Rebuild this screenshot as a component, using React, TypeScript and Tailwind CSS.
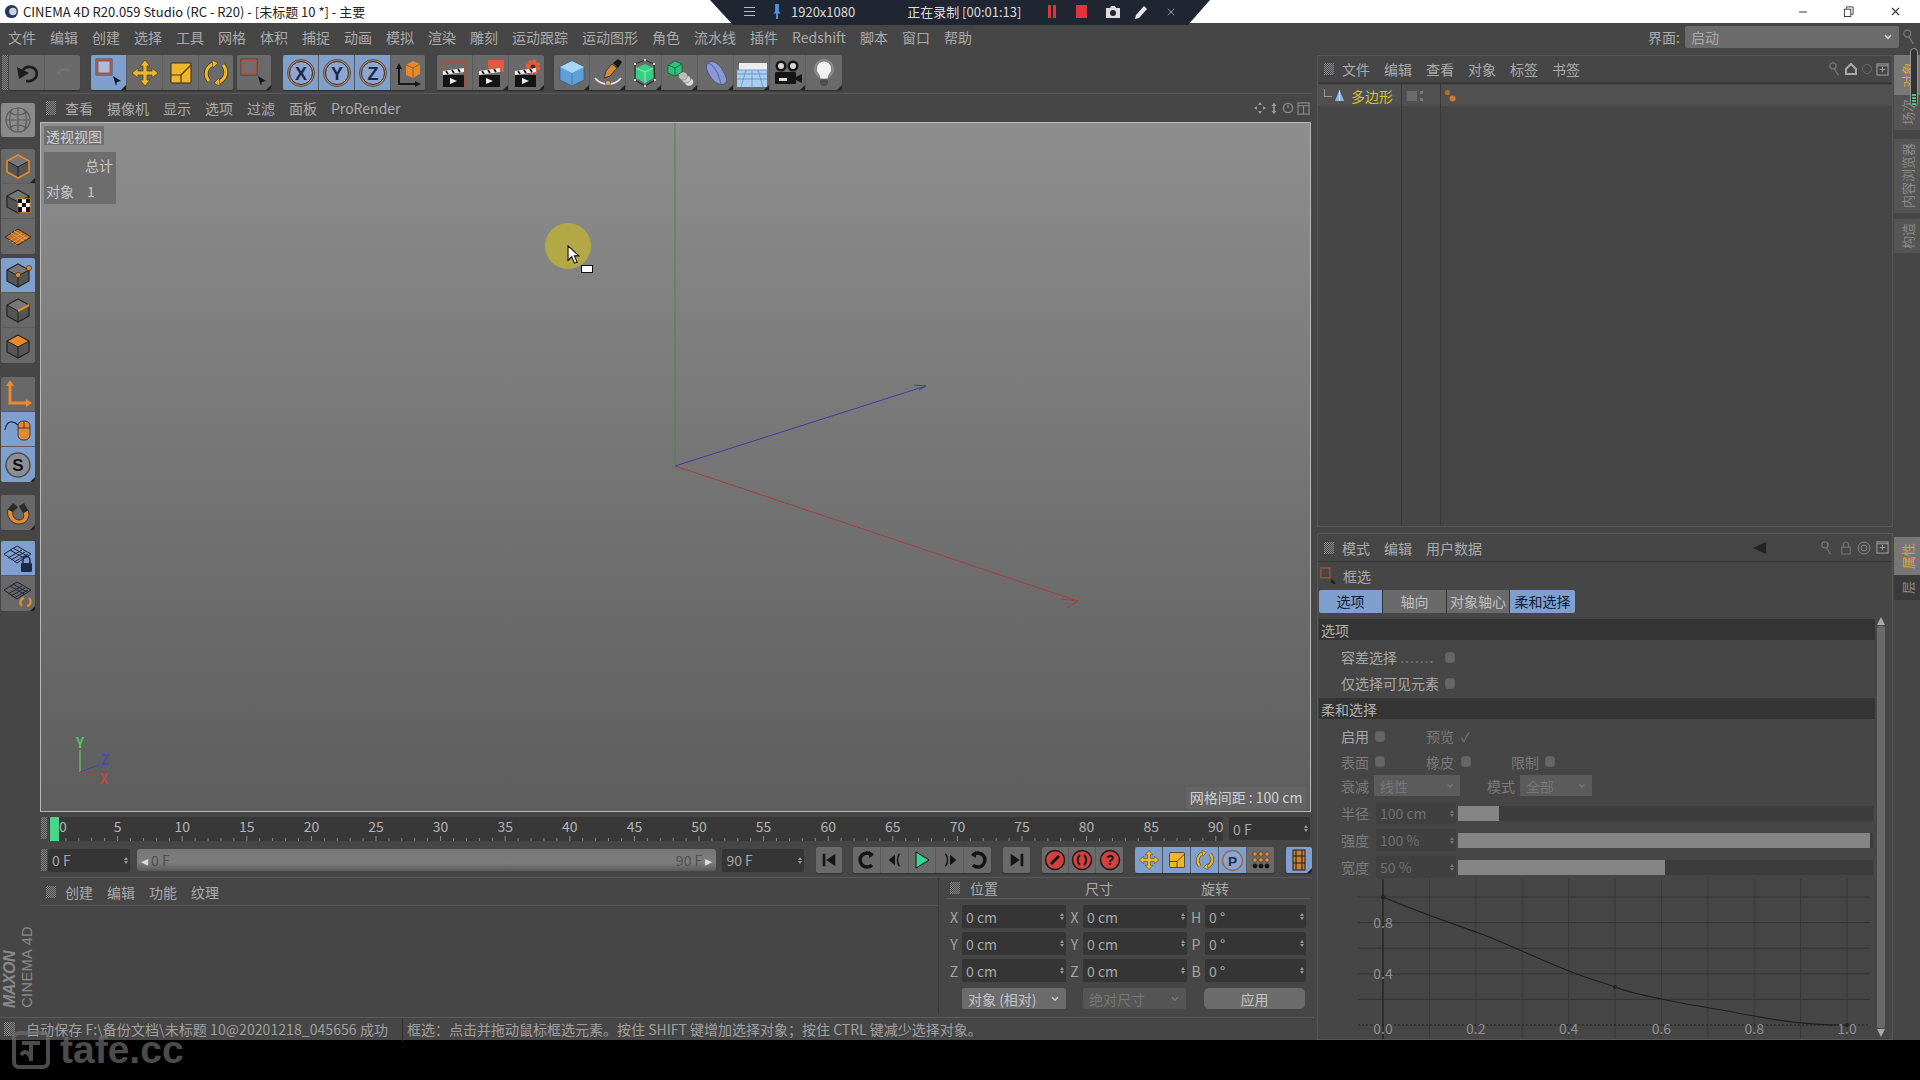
import React from 'react';
import { ChevronDown, Minus, X } from 'lucide-react';

const OR = '#e58a2e';
const YE = '#eab72f';
const NAVY = '#1b2a4a';

const menus = ['文件', '编辑', '创建', '选择', '工具', '网格', '体积', '捕捉', '动画', '模拟', '渲染', '雕刻', '运动跟踪', '运动图形', '角色', '流水线', '插件', 'Redshift', '脚本', '窗口', '帮助'];

function Grip({ className = '' }: { className?: string }) {
  return <div className={`bg-[conic-gradient(#8c8c8c_25%,#424242_0_50%,#8c8c8c_0_75%,#424242_0)] bg-[length:2px_2px] ${className}`} />;
}

function Svg({ children }: { children: React.ReactNode }) {
  return (
    <svg viewBox="0 0 30 30" className="w-[30px] h-[30px]">
      {children}
    </svg>
  );
}

const Corner = () => <span className="absolute right-0 bottom-0 w-0 h-0 border-l-[5px] border-l-transparent border-b-[5px] border-b-[#222]" />;

function Tool({ active, children, w = 'w-[36px]', short, corner }: { active?: boolean; children: React.ReactNode; w?: string; short?: boolean; corner?: boolean }) {
  return (
    <div className={`relative ${w} ${short ? 'h-[26px]' : 'h-[35px]'} flex items-center justify-center border-r border-[#5a5a5a] last:border-r-0 ${active ? 'bg-[#7f9fcf]' : 'bg-[#6a6a6a]'}`}>
      {children}
      {corner && <Corner />}
    </div>
  );
}

function ToolGroup({ children, className = '' }: { children: React.ReactNode; className?: string }) {
  return <div className={`flex rounded-[2px] overflow-hidden shadow-[0_1px_1px_#2f2f2f] ${className}`}>{children}</div>;
}

function LeftTool({ active, children, corner }: { active?: boolean; children: React.ReactNode; corner?: boolean }) {
  return (
    <div className={`relative w-[34px] h-[35px] flex items-center justify-center border-b border-[#5c5c5c] last:border-b-0 ${active ? 'bg-[#7f9fcf]' : 'bg-[#686868]'}`}>
      {children}
      {corner && <Corner />}
    </div>
  );
}

const Select = ({ active }: { active?: boolean }) => (
  <Svg>
    <rect x="2" y="1" width="16" height="16" fill="none" stroke="#3a3a3a" strokeWidth="0.8" />
    <rect x="3.5" y="2.5" width="13" height="13" fill={active ? '#a9bedd' : '#6f6f6f'} stroke="#b5523f" strokeWidth="2" />
    <path d="M19 18l8 5-4 1-1 4z" fill="#10172a" />
  </Svg>
);
const MoveIcon = () => (
  <Svg>
    <path d="M15 2l5 6h-3v5h5v-3l6 5-6 5v-3h-5v5h3l-5 6-5-6h3v-5H8v3l-6-5 6-5v3h5V8h-3z" fill={YE} stroke="#5a4414" strokeWidth="0.8" />
  </Svg>
);
const ScaleIcon = () => (
  <Svg>
    <rect x="5" y="5" width="20" height="20" rx="1" fill="#f0b52f" stroke="#3c2e10" strokeWidth="1" />
    <path d="M5 17h10v8M15 17l10-10" fill="none" stroke="#4a3a14" strokeWidth="1.2" />
  </Svg>
);
const RotateIcon = () => (
  <Svg>
    <path d="M8 23C3 17 5 9 12 6M22 7c5 6 3 14-4 17" fill="none" stroke="#4a3a14" strokeWidth="4.6" />
    <path d="M8 23C3 17 5 9 12 6M22 7c5 6 3 14-4 17" fill="none" stroke={YE} strokeWidth="3" />
    <path d="M11 2l6 3-5 5zM19 28l-6-3 5-5z" fill={YE} stroke="#4a3a14" strokeWidth="0.6" />
  </Svg>
);
const AxisCircle = ({ l }: { l: string }) => (
  <Svg>
    <circle cx="15" cy="15" r="13.5" fill="#a98a74" stroke="#6a4a30" strokeWidth="1" />
    <circle cx="15" cy="15" r="11.5" fill="#8ea6cf" stroke="#2b2b2b" strokeWidth="1" />
    <text x="15" y="21.5" textAnchor="middle" fontSize="18" fontWeight="700" fill={NAVY} fontFamily="Liberation Sans">{l}</text>
  </Svg>
);
const CoordIcon = () => (
  <Svg>
    <path d="M6 10v16h18" fill="none" stroke="#181818" strokeWidth="2" />
    <path d="M6 5l3 6H3zM28 26l-6 3v-6z" fill="#181818" />
    <path d="M13 7l7-4 7 3v10l-7 4-7-3z" fill={OR} />
    <path d="M13 7l7 3 7-4M20 10v10" fill="none" stroke="#9a5a18" strokeWidth="1" />
  </Svg>
);
const Clapper = ({ kind }: { kind: 0 | 1 | 2 }) => (
  <Svg>
    {kind === 0 && <path d="M3 13V2h24v26h-3M5 13V4h20v24" fill="none" stroke="#a8503a" strokeWidth="1" />}
    {kind === 1 && <rect x="12" y="2" width="16" height="12" rx="1" fill="#de5d3c" />}
    {kind === 2 && <circle cx="21" cy="9" r="6" fill="#de5d3c" stroke="#de5d3c" strokeWidth="3" strokeDasharray="3 1.6" />}
    {kind === 2 && <circle cx="21" cy="9" r="2.4" fill="#333" />}
    <rect x="3" y="17" width="21" height="12" fill="#141414" />
    <path d="M3 13l21-3v4L3 17z" fill="#eee" />
    <path d="M6 13l2 3M12 12l2 3M18 11l2 3" stroke="#111" strokeWidth="1.8" />
    <path d="M10 20l7 3-7 3z" fill="#eee" />
  </Svg>
);
const BlueCube = () => (
  <Svg>
    <path d="M15 3l12 6v13l-12 6-12-6V9z" fill="#5f9fd8" stroke="#2f4d70" strokeWidth="0.6" />
    <path d="M15 3l12 6-12 6L3 9z" fill="#a6d6f2" />
    <path d="M15 15v13" stroke="#3f78ac" strokeWidth="0.8" />
  </Svg>
);
const PenIcon = () => (
  <Svg>
    <path d="M19 6l5 4-7 8-6 2 2-7z" fill="#d98a36" stroke="#1c1c1c" strokeWidth="0.7" />
    <path d="M20 5l5-4 4 3-4 6z" fill="#181818" />
    <path d="M2 20c6 8 20 8 26 0" fill="none" stroke="#e6e6e6" strokeWidth="1.8" />
    <circle cx="15" cy="25" r="2.6" fill="#d9a860" stroke="#333" strokeWidth="0.5" />
  </Svg>
);
const GreenBox = () => (
  <Svg>
    <path d="M6 6l10-4 9 4 1 16-10 6-10-6z" fill="none" stroke="#2a2a2a" strokeWidth="1.1" />
    <path d="M7 10l9-4 8 4v10l-8 5-9-5z" fill="#38cf85" />
    <path d="M7 10l9 4 8-4M16 14v11" fill="none" stroke="#8ef0b4" strokeWidth="1" />
    <g fill="#eee">
      <circle cx="6" cy="6" r="1.1" />
      <circle cx="25" cy="6" r="1.1" />
      <circle cx="6" cy="22" r="1.1" />
      <circle cx="26" cy="22" r="1.1" />
      <circle cx="16" cy="2" r="1.1" />
      <circle cx="16" cy="28" r="1.1" />
    </g>
  </Svg>
);
const ArrayIcon = () => (
  <Svg>
    <ellipse cx="24" cy="24" rx="4.5" ry="4" fill="#ddd" stroke="#666" strokeWidth="0.5" />
    <ellipse cx="21" cy="21" rx="4.5" ry="4" fill="#cfcfcf" stroke="#666" strokeWidth="0.5" />
    <ellipse cx="18" cy="18" rx="4.5" ry="4" fill="#bdbdbd" stroke="#666" strokeWidth="0.5" />
    <path d="M3 7l7-4 7 3v8l-7 4-7-3z" fill="#2fc07a" stroke="#14492c" strokeWidth="0.6" />
    <path d="M3 7l7 3 7-4M10 10v8" fill="none" stroke="#0f6d40" strokeWidth="1" />
  </Svg>
);
const Blob = () => (
  <Svg>
    <path d="M7 5c5-4 11 1 15 8s5 11 1 13c-5 2-11-3-14-8S4 8 7 5z" fill="#8a9ad8" stroke="#3a4574" strokeWidth="0.7" />
    <path d="M7 5c5 2 10 8 13 21" fill="none" stroke="#5e6da8" strokeWidth="1.2" />
  </Svg>
);
const FloorIcon = () => (
  <Svg>
    <path d="M2 5h28v7H2z" fill="#ececec" />
    <path d="M0 12h30v17H0z" fill="#a9cdf0" />
    <path d="M0 16h30M0 21h30M9 12L4 29M21 12l5 17M15 12v17M0 12h30" stroke="#6f94c0" strokeWidth="0.9" fill="none" />
  </Svg>
);
const CameraIcon = () => (
  <Svg>
    <circle cx="8" cy="8" r="5.5" fill="#151515" />
    <circle cx="20" cy="8" r="5.5" fill="#151515" />
    <circle cx="8" cy="8" r="3" fill="#d8d8d8" />
    <circle cx="20" cy="8" r="3" fill="#d8d8d8" />
    <rect x="2" y="14" width="21" height="12" rx="1" fill="#151515" />
    <rect x="6" y="20" width="8" height="3" fill="#ddd" />
    <path d="M23 19l6-3v9l-6-3z" fill="#151515" />
  </Svg>
);
const BulbIcon = () => (
  <Svg>
    <circle cx="15" cy="11" r="10" fill="#8e8e8e" />
    <path d="M15 3a8 8 0 0 1 5 14l-1 4h-8l-1-4a8 8 0 0 1 5-14z" fill="#f2f2f2" stroke="#555" strokeWidth="0.7" />
    <path d="M11 22h8v3l-2 3h-4l-2-3z" fill="#4e4e4e" />
  </Svg>
);
const Cube = ({ mode }: { mode: 'model' | 'point' | 'edge' | 'poly' | 'tex' }) => (
  <Svg>
    <path d="M15 4l11 6v11l-11 6-11-6V10z" fill="#555" />
    <path d="M15 4l11 6-11 6-11-6z" fill={mode === 'poly' ? OR : '#777'} />
    <path d="M15 16v11M4 10l11 6 11-6" fill="none" stroke="#222" strokeWidth="1" />
    <path d="M15 4l11 6v11l-11 6-11-6V10z" fill="none" stroke={mode === 'model' ? OR : '#222'} strokeWidth={mode === 'model' ? 1.6 : 1.2} />
    {mode === 'point' && (
      <>
        <circle cx="15" cy="15" r="2.6" fill={OR} stroke="#222" strokeWidth="0.6" />
        <circle cx="26" cy="8" r="2.6" fill={OR} stroke="#222" strokeWidth="0.6" />
      </>
    )}
    {mode === 'edge' && <path d="M15 16l11-6" stroke={OR} strokeWidth="2" />}
    {mode === 'tex' && (
      <>
        <rect x="15" y="13" width="12" height="13" fill="#f3f3f3" stroke={OR} />
        <path d="M15 13h4v4h-4zM23 13h4v4h-4zM19 17h4v4h-4zM15 21h4v5h-4zM23 21h4v5h-4z" fill="#111" />
      </>
    )}
  </Svg>
);
const MeshIcon = ({ children }: { children?: React.ReactNode }) => (
  <Svg>
    <path d="M14 3l14 8-14 9L1 11z" fill="none" stroke="#1c2433" strokeWidth="1" />
    <path d="M7 7l14 8M10 5l14 8M5 15l14-8M8 17l14-8M11 19l14-8" stroke="#1c2433" strokeWidth="1" />
    {children}
  </Svg>
);
const Grid3D = () => (
  <Svg>
    <path d="M15 7l13 8-13 8-13-8z" fill="#b9702a" stroke="#3a2a18" />
    <path d="M8 11l13 8M11 9l13 8M6 19l13-8M9 21l13-8M12 22.5l13-8" stroke="#f0a04a" strokeWidth="0.9" />
  </Svg>
);

function Frame({ v, w = 'w-[104px]', text = 'text-[14px]' }: { v: string; w?: string; text?: string }) {
  return (
    <div className={`${w} h-[23px] bg-[#353535] rounded-[2px] flex items-center justify-between pl-[4px] pr-[2px] text-[#a8a8a8] ${text}`}>
      <span>{v}</span>
      <span className="flex flex-col gap-[1px]">
        <span className="w-0 h-0 border-x-[2.5px] border-x-transparent border-b-[3px] border-b-[#999]" />
        <span className="w-0 h-0 border-x-[2.5px] border-x-transparent border-t-[3px] border-t-[#999]" />
      </span>
    </div>
  );
}

function CoordRow({ a, b, c, av, cv }: { a: string; b: string; c: string; av: string; cv: string }) {
  return (
    <div className="flex items-center h-[23px] text-[14px] text-[#a5a5a5]">
      <span className="w-[16px] text-center">{a}</span>
      <Frame v={av} />
      <span className="w-[17px] text-center">{b}</span>
      <Frame v={av} />
      <span className="w-[18px] text-center">{c}</span>
      <Frame v={cv} w="w-[101px]" />
    </div>
  );
}

function Check() {
  return <span className="inline-block w-[10px] h-[11px] rounded-[2px] bg-[#666] shadow-[inset_0_0_1px_#222]" />;
}

function Slider({ label, value, fill }: { label: string; value: string; fill: string }) {
  return (
    <div className="flex items-center h-[22px] mt-[5px]">
      <span className="w-[57px] pl-[22px] text-[14px] text-[#7c7c7c] whitespace-nowrap">{label}</span>
      <div className="w-[80px] h-[22px] bg-[#404040] flex items-center justify-between pl-[4px] pr-[2px] text-[14px] text-[#707070]">
        <span>{value}</span>
        <span className="flex flex-col gap-[1px]">
          <span className="w-0 h-0 border-x-[2.5px] border-x-transparent border-b-[3px] border-b-[#777]" />
          <span className="w-0 h-0 border-x-[2.5px] border-x-transparent border-t-[3px] border-t-[#777]" />
        </span>
      </div>
      <div className="ml-[2px] w-[415px] h-[15px] bg-[#3c3c3c]">
        <div className={`h-full bg-[#858585] ${fill}`} />
      </div>
    </div>
  );
}

function Dim({ children, className = '' }: { children: React.ReactNode; className?: string }) {
  return <span className={`text-[14px] text-[#7a7a7a] whitespace-nowrap ${className}`}>{children}</span>;
}

function Section({ children, className = '' }: { children: React.ReactNode; className?: string }) {
  return <div className={`h-[21px] bg-[#343434] pl-[2px] flex items-center text-[14px] text-[#b0b0b0] ${className}`}>{children}</div>;
}

function FalloffGraph() {
  const xs = Array.from({ length: 11 }, (_, i) => 25 + i * 46.4);
  const ys = Array.from({ length: 6 }, (_, i) => 18 + i * 25.6);
  const labels = ['0.0', '0.2', '0.4', '0.6', '0.8', '1.0'];
  return (
    <svg width="520" height="160" className="block">
      <path d="M0 14v8l4-4z" fill="#222" transform="translate(-5 0)" />
      {xs.map((x) => (
        <line key={x} x1={x} y1="0" x2={x} y2="160" stroke="#393939" strokeWidth="1" />
      ))}
      {ys.slice(0, 5).map((y) => (
        <line key={y} x1="0" y1={y} x2="512" y2={y} stroke="#343434" strokeWidth="1" />
      ))}
      <line x1="25" y1="0" x2="25" y2="160" stroke="#1c1c1c" strokeWidth="1" />
      <line x1="0" y1="146" x2="512" y2="146" stroke="#1c1c1c" strokeWidth="1" strokeDasharray="2 2" />
      <path d="M25 18C60 33 90 43 118 53S180 80 211 92S245 103 257 108S285 116 303 120S360 130 396 137S460 146 489 146" fill="none" stroke="#1f1f1f" strokeWidth="1.2" />
      <circle cx="25" cy="18" r="2" fill="#222" />
      <circle cx="257" cy="108" r="2" fill="#222" />
      <circle cx="489" cy="146" r="2" fill="#222" />
      <text x="25" y="49" textAnchor="middle" fontSize="14" fill="#909090">0.8</text>
      <text x="25" y="100" textAnchor="middle" fontSize="14" fill="#909090">0.4</text>
      {labels.map((t, i) => (
        <text key={t} x={25 + i * 92.8} y="155" textAnchor="middle" fontSize="14" fill="#909090">{t}</text>
      ))}
    </svg>
  );
}

function Ruler() {
  return (
    <svg width="1174" height="24" className="block bg-[#383838]">
      {Array.from({ length: 91 }, (_, i) => (
        <line key={i} x1={4 + i * 12.92} y1={i % 5 === 0 ? 19 : 21} x2={4 + i * 12.92} y2="24" stroke="#8a8a8a" strokeWidth="1" />
      ))}
      <rect x="1" y="0" width="9" height="24" fill="#47d68c" />
      {Array.from({ length: 19 }, (_, i) => (
        <text key={i} x={i === 0 ? 14 : 4 + i * 64.6} y="15" textAnchor="middle" fontSize="14" fill="#b4b4b4">{i * 5}</text>
      ))}
    </svg>
  );
}

export default function App() {
  return (
    <div className="relative w-[1920px] h-[1080px] overflow-hidden bg-black font-['Noto_Sans_CJK_SC','Noto_Sans',sans-serif] text-[14px] leading-none">
      {/* Window title */}
      <div className="h-[23px] bg-white flex items-center pl-[4px] text-[13px] text-[#222]">
        <svg viewBox="0 0 16 16" className="w-[15px] h-[15px] mr-[4px]">
          <circle cx="8" cy="8" r="7" fill="#24365c" />
          <circle cx="9.5" cy="8" r="4" fill="#c8d2e2" />
        </svg>
        <span>CINEMA 4D R20.059 Studio (RC - R20) - [未标题 10 *] - 主要</span>
        <div className="ml-auto flex items-center text-[#333]">
          <Minus className="w-[12px] h-[12px] mr-[34px]" />
          <svg viewBox="0 0 12 12" className="w-[11px] h-[11px] mr-[35px]" fill="none" stroke="#333">
            <rect x="1.5" y="3.5" width="7" height="8" />
            <path d="M4 3V1h7v8H9" />
          </svg>
          <X className="w-[13px] h-[13px] mr-[18px]" />
        </div>
      </div>

      {/* Recorder bar overlay */}
      <div className="absolute left-[710px] top-0 w-[500px] h-[25px] pb-[2px] bg-[#1f2531] [clip-path:polygon(0_0,100%_0,95.6%_100%,4.6%_100%)] flex items-center text-[13px] text-[#dcdcdc]">
        <div className="ml-[34px] w-[11px] flex flex-col gap-[3px]">
          <span className="h-px bg-[#bbb]" />
          <span className="h-px bg-[#bbb]" />
          <span className="h-px bg-[#bbb]" />
        </div>
        <svg viewBox="0 0 10 16" className="ml-[17px] w-[10px] h-[15px]">
          <path d="M3 0h4v8l2 2H6v6H4v-6H1l2-2z" fill="#4d93e6" />
        </svg>
        <span className="ml-[9px]">1920x1080</span>
        <span className="ml-[52px]">正在录制 [00:01:13]</span>
        <span className="ml-[27px] w-[8px] h-[13px] border-x-[3px] border-[#e0333c]" />
        <span className="ml-[20px] w-[11px] h-[13px] bg-[#e0333c]" />
        <svg viewBox="0 0 16 14" className="ml-[18px] w-[16px] h-[14px]">
          <path d="M1 3h4l1-2h4l1 2h4v10H1z" fill="#ddd" />
          <circle cx="8" cy="8" r="3" fill="#1f2531" />
        </svg>
        <svg viewBox="0 0 14 14" className="ml-[13px] w-[14px] h-[14px]">
          <path d="M10 1l3 3-8 9-4 1 1-4z" fill="#e6e6e6" />
        </svg>
        <X className="ml-[17px] w-[12px] h-[12px] text-[#999]" />
      </div>

      <div className="h-[1017px] bg-[#464646]">
        {/* Main menu */}
        <div className="h-[29px] flex items-center pl-[8px] pb-[2px] text-[#ababab]">
          <div className="flex gap-[14px]">
            {menus.map((m) => (
              <span key={m}>{m}</span>
            ))}
          </div>
          <span className="ml-auto mr-[5px]">界面:</span>
          <div className="w-[214px] h-[22px] rounded-[2px] bg-[#6b6b6b] flex items-center justify-between px-[6px] text-[#a8a8a8]">
            <span>启动</span>
            <ChevronDown className="w-[10px] h-[10px] text-[#ddd]" strokeWidth={4} />
          </div>
          <svg viewBox="0 0 14 20" className="w-[12px] h-[18px] ml-[4px] mr-[5px]" fill="none" stroke="#777" strokeWidth="1.6">
            <circle cx="5" cy="6" r="4" />
            <path d="M7 10l5 8" />
          </svg>
        </div>

        <div className="flex h-[988px]">
          {/* Left work area */}
          <div className="w-[1314px] flex flex-col">
            <div className="h-[41px] flex items-start pt-[3px] pl-[2px]">
              <Grip className="w-[6px] h-[35px] mr-[1px]" />
              <ToolGroup>
                <Tool>
                  <Svg>
                    <path d="M11 12c3-4 9-4 12-1s2 9-2 11-5 1-7 1" fill="none" stroke="#1c1c1c" strokeWidth="2.6" />
                    <path d="M5 9l2 12 10-6z" fill="#1c1c1c" />
                  </Svg>
                </Tool>
                <Tool w="w-[35px]">
                  <Svg>
                    <path d="M10 16c1-5 8-6 11-3" fill="none" stroke="#747474" strokeWidth="2.4" />
                  </Svg>
                </Tool>
              </ToolGroup>
              <ToolGroup className="ml-[11px]">
                <Tool active corner><Select active /></Tool>
                <Tool><MoveIcon /></Tool>
                <Tool><ScaleIcon /></Tool>
                <Tool w="w-[34px]"><RotateIcon /></Tool>
              </ToolGroup>
              <ToolGroup className="ml-[4px]">
                <Tool w="w-[34px]" corner><Select /></Tool>
              </ToolGroup>
              <ToolGroup className="ml-[12px]">
                <Tool active><AxisCircle l="X" /></Tool>
                <Tool active><AxisCircle l="Y" /></Tool>
                <Tool active><AxisCircle l="Z" /></Tool>
                <Tool w="w-[34px]"><CoordIcon /></Tool>
              </ToolGroup>
              <ToolGroup className="ml-[12px]">
                <Tool><Clapper kind={0} /></Tool>
                <Tool corner><Clapper kind={1} /></Tool>
                <Tool w="w-[35px]" corner><Clapper kind={2} /></Tool>
              </ToolGroup>
              <ToolGroup className="ml-[10px]">
                <Tool corner><BlueCube /></Tool>
                <Tool corner><PenIcon /></Tool>
                <Tool corner><GreenBox /></Tool>
                <Tool corner><ArrayIcon /></Tool>
                <Tool corner><Blob /></Tool>
                <Tool corner><FloorIcon /></Tool>
                <Tool corner><CameraIcon /></Tool>
                <Tool corner><BulbIcon /></Tool>
              </ToolGroup>
            </div>

            <div className="flex h-[924px]">
              {/* Mode strip */}
              <div className="w-[40px] flex flex-col items-start pl-[1px] relative">
                <div className="mt-[10px] w-[34px] h-[34px] rounded-[2px] bg-[#8a8a8a] flex items-center justify-center">
                  <svg viewBox="0 0 30 30" className="w-[30px] h-[30px]" fill="none" stroke="#5c5c5c" strokeWidth="1.2">
                    <circle cx="15" cy="15" r="12" />
                    <path d="M3 15h24M15 3v24M6 7c6 4 12 4 18 0M6 23c6-4 12-4 18 0M9 4c-3 7-3 15 0 22M21 4c3 7 3 15 0 22" />
                  </svg>
                </div>
                <div className="mt-[12px] rounded-[2px] overflow-hidden">
                  <LeftTool corner><Cube mode="model" /></LeftTool>
                  <LeftTool><Cube mode="tex" /></LeftTool>
                  <LeftTool><Grid3D /></LeftTool>
                </div>
                <div className="mt-[4px] rounded-[2px] overflow-hidden">
                  <LeftTool active><Cube mode="point" /></LeftTool>
                  <LeftTool><Cube mode="edge" /></LeftTool>
                  <LeftTool><Cube mode="poly" /></LeftTool>
                </div>
                <div className="mt-[14px] rounded-[2px] overflow-hidden">
                  <LeftTool>
                    <Svg>
                      <path d="M7 7v17h17" fill="none" stroke={OR} strokeWidth="3" />
                      <path d="M7 1l4 6H3zM29 24l-6 4v-8z" fill={OR} />
                    </Svg>
                  </LeftTool>
                  <LeftTool active>
                    <Svg>
                      <path d="M2 16c2-12 10-8 13-5 2 2 4-2 5-2" fill="none" stroke={NAVY} strokeWidth="1.2" />
                      <rect x="15" y="7" width="12" height="19" rx="5" fill={OR} stroke={NAVY} strokeWidth="0.8" />
                      <path d="M15 14h12M21 7v7" stroke={NAVY} strokeWidth="0.8" />
                    </Svg>
                  </LeftTool>
                  <LeftTool active corner>
                    <Svg>
                      <circle cx="15" cy="15" r="12" fill="#8b8f96" stroke="#4d4d4d" strokeWidth="1.5" />
                      <text x="15" y="21" textAnchor="middle" fontSize="17" fontWeight="700" fill="#111" fontFamily="Liberation Sans">S</text>
                    </Svg>
                  </LeftTool>
                </div>
                <div className="mt-[13px] rounded-[2px] overflow-hidden">
                  <LeftTool corner>
                    <Svg>
                      <path d="M5 11c-2 7 3 15 11 15 7 0 12-6 9-14l-5 3c2 4 0 7-4 7-5 0-7-5-6-8z" fill={OR} stroke="#222" strokeWidth="0.8" />
                      <path d="M5 11l5-6 5 4-5 5zM25 12l-4-7-5 3 4 7z" fill="#2b2b2b" />
                    </Svg>
                  </LeftTool>
                </div>
                <div className="mt-[11px] rounded-[2px] overflow-hidden">
                  <LeftTool active>
                    <MeshIcon>
                      <rect x="18" y="20" width="11" height="9" rx="1" fill={NAVY} />
                      <path d="M20 20v-3a3 3 0 0 1 7 0v3" fill="none" stroke={NAVY} strokeWidth="1.5" />
                    </MeshIcon>
                  </LeftTool>
                  <LeftTool corner>
                    <MeshIcon>
                      <path d="M19 27c-3-3-2-7 2-8m5 0c3 3 2 7-2 8" fill="none" stroke={OR} strokeWidth="2.4" />
                    </MeshIcon>
                  </LeftTool>
                </div>
                <div className="absolute left-[2px] bottom-[9px] flex items-end gap-[3px] text-[#8a8a8a]">
                  <span className="[writing-mode:vertical-rl] [text-orientation:sideways] rotate-180 font-['Liberation_Sans'] font-bold italic text-[16px] leading-[15px] tracking-[-0.5px]">MAXON</span>
                  <span className="[writing-mode:vertical-rl] [text-orientation:sideways] rotate-180 font-['Liberation_Sans'] text-[14.5px] leading-[14px] tracking-[0.4px]">CINEMA 4D</span>
                </div>
              </div>

              {/* Center column */}
              <div className="w-[1272px] flex flex-col">
                <div className="h-[29px] flex items-center text-[#ababab] border-t border-[#585858]">
                  <Grip className="ml-[6px] w-[10px] h-[14px]" />
                  <div className="ml-[9px] flex gap-[14px]">
                    <span>查看</span>
                    <span>摄像机</span>
                    <span>显示</span>
                    <span>选项</span>
                    <span>过滤</span>
                    <span>面板</span>
                    <span>ProRender</span>
                  </div>
                  <div className="ml-auto mr-[2px] flex items-center gap-[3px] text-[#8c8c8c]">
                    <svg viewBox="0 0 12 12" className="w-[12px] h-[12px]"><path d="M6 0l2 3H4zM6 12L4 9h4zM0 6l3-2v4zM12 6L9 8V4z" fill="#9a9a9a" /></svg>
                    <svg viewBox="0 0 12 14" className="w-[10px] h-[13px]"><path d="M6 0l3 4H7v6h2l-3 4-3-4h2V4H3z" fill="#9a9a9a" /></svg>
                    <svg viewBox="0 0 12 12" className="w-[12px] h-[12px]" fill="none" stroke="#8c8c8c" strokeWidth="1.4"><circle cx="6" cy="6" r="4.6" /><path d="M6 3v3" /></svg>
                    <svg viewBox="0 0 14 14" className="w-[13px] h-[13px]" fill="none" stroke="#8c8c8c" strokeWidth="1.2"><rect x="1" y="1" width="12" height="12" /><path d="M1 4h12M7 4v9" /></svg>
                  </div>
                </div>

                {/* Viewport */}
                <div className="relative h-[690px] w-[1271px] border border-[#b8b8b8] bg-[linear-gradient(#8e8e8e_0%,#7a7a7a_40%,#5d5d5d_100%)] overflow-hidden">
                  <div className="absolute left-[3px] top-[3px] h-[19px] w-[60px] bg-[#6f6f6f] flex items-center justify-center text-[#d0d0d0] text-[14px]">透视视图</div>
                  <div className="absolute left-[3px] top-[29px] h-[52px] w-[72px] bg-[#6d6d6d] text-[14px] text-[#c8c8c8]">
                    <div className="h-[26px] flex items-center justify-end pr-[3px]">总计</div>
                    <div className="h-[26px] flex items-center pl-[2px]">对象<span className="ml-[13px]">1</span></div>
                  </div>

                  <svg className="absolute inset-0" width="1269" height="688">
                    <line x1="634" y1="344" x2="634" y2="0" stroke="#3f8f3f" strokeWidth="1" />
                    <line x1="634" y1="343" x2="885" y2="263" stroke="#3b3fa0" strokeWidth="1" />
                    <path d="M873 262l12 1-7 4" fill="none" stroke="#3b3fa0" strokeWidth="1" />
                    <line x1="634" y1="343" x2="1037" y2="478" stroke="#a83c3c" strokeWidth="1" />
                    <path d="M1020 476l17 2-11 7" fill="none" stroke="#a83c3c" strokeWidth="1" />
                    <line x1="39" y1="627" x2="39" y2="649" stroke="#5cc05c" strokeWidth="1.4" />
                    <line x1="39" y1="649" x2="58" y2="642" stroke="#4444a8" strokeWidth="1" />
                    <line x1="39" y1="649" x2="54" y2="652" stroke="#b04444" strokeWidth="1" />
                    <text x="39" y="625" textAnchor="middle" fontSize="14" fontWeight="700" fill="#5cc05c">Y</text>
                    <text x="64" y="642" textAnchor="middle" fontSize="14" fontWeight="700" fill="#4a4ab8">Z</text>
                    <text x="63" y="661" textAnchor="middle" fontSize="14" fontWeight="700" fill="#b84a4a">X</text>
                  </svg>

                  {/* Mouse highlight */}
                  <div className="absolute left-[504px] top-[100px] w-[46px] h-[46px] rounded-full bg-[#b7ad3f] opacity-90" />
                  <svg viewBox="0 0 14 22" className="absolute left-[526px] top-[122px] w-[13px] h-[20px]">
                    <path d="M1 1v16l4-4 3 7 3-1-3-7h5z" fill="#fff" stroke="#111" strokeWidth="1.2" />
                  </svg>
                  <div className="absolute left-[540px] top-[142px] w-[12px] h-[8px] border border-[#111] bg-white" />

                  <div className="absolute right-[4px] bottom-[2px] h-[22px] w-[120px] pb-[2px] bg-[#646464] flex items-center justify-center text-[14px] text-[#d0d0d0] whitespace-nowrap">
                    网格间距 : 100 cm
                  </div>
                </div>

                {/* Timeline */}
                <div className="mt-[5px] flex items-start h-[24px]">
                  <Grip className="w-[6px] h-[22px] ml-[1px] mr-[2px]" />
                  <Ruler />
                  <div className="ml-[6px]">
                    <Frame v="0 F" w="w-[81px]" />
                  </div>
                </div>
                <div className="mt-[6px] h-[26px] flex items-center">
                  <Grip className="w-[6px] h-[22px] ml-[1px] mr-[1px]" />
                  <Frame v="0 F" w="w-[82px]" />
                  <div className="ml-[7px] w-[580px] h-[22px] rounded-[3px] bg-[linear-gradient(#767676,#7e7e7e_60%,#5b5b5b)] flex items-center justify-between px-[4px] text-[14px] text-[#4f4f4f]">
                    <span><span className="text-[#ddd]">◂</span> 0 F</span>
                    <span>90 F <span className="text-[#ddd]">▸</span></span>
                  </div>
                  <div className="ml-[6px]">
                    <Frame v="90 F" w="w-[82px]" />
                  </div>
                  <ToolGroup className="ml-[12px]">
                    <Tool short w="w-[26px]"><svg viewBox="0 0 20 20" className="w-[18px] h-[18px]"><path d="M3 3h3v14H3zM17 3v14l-10-7z" fill="#151515" /></svg></Tool>
                  </ToolGroup>
                  <ToolGroup className="ml-[11px]">
                    <Tool short w="w-[28px]"><svg viewBox="0 0 20 20" className="w-[20px] h-[20px]"><path d="M15 5a7 7 0 1 0 0 10" fill="none" stroke="#151515" strokeWidth="3.5" /><path d="M12 1l5 4-5 3z" fill="#151515" /></svg></Tool>
                    <Tool short w="w-[28px]"><svg viewBox="0 0 20 20" className="w-[18px] h-[18px]"><path d="M10 4v12l-7-6z" fill="#151515" /><path d="M15 3c-3 4-3 10 0 14" fill="none" stroke="#151515" strokeWidth="1.6" /></svg></Tool>
                    <Tool short w="w-[27px]"><svg viewBox="0 0 20 20" className="w-[20px] h-[20px]"><path d="M4 2l13 8-13 8z" fill="#35d693" stroke="#111" /></svg></Tool>
                    <Tool short w="w-[28px]"><svg viewBox="0 0 20 20" className="w-[18px] h-[18px]"><path d="M10 4v12l7-6z" fill="#151515" /><path d="M5 3c3 4 3 10 0 14" fill="none" stroke="#151515" strokeWidth="1.6" /></svg></Tool>
                    <Tool short w="w-[27px]"><svg viewBox="0 0 20 20" className="w-[20px] h-[20px]"><path d="M5 5a7 7 0 1 1 0 10" fill="none" stroke="#151515" strokeWidth="3.5" /><path d="M8 1L3 5l5 3z" fill="#151515" /></svg></Tool>
                  </ToolGroup>
                  <ToolGroup className="ml-[12px]">
                    <Tool short w="w-[27px]"><svg viewBox="0 0 20 20" className="w-[18px] h-[18px]"><path d="M3 3v14l10-7zM14 3h3v14h-3z" fill="#151515" /></svg></Tool>
                  </ToolGroup>
                  <ToolGroup className="ml-[12px]">
                    {['key', 'auto', '?'].map((k) => (
                      <Tool short key={k} w="w-[27px]">
                        <svg viewBox="0 0 22 22" className="w-[22px] h-[22px]">
                          <circle cx="11" cy="11" r="9.5" fill="#d2413f" stroke="#1c1c1c" strokeWidth="1.5" />
                          {k === 'key' && <path d="M7 15l8-8" stroke="#111" strokeWidth="2.6" />}
                          {k === 'auto' && <path d="M9 6c-3 3-3 7 0 10M13 6c3 3 3 7 0 10" fill="none" stroke="#111" strokeWidth="2" />}
                          {k === '?' && <text x="11" y="16" textAnchor="middle" fontSize="14" fontWeight="700" fill="#111" fontFamily="Liberation Sans">?</text>}
                        </svg>
                      </Tool>
                    ))}
                  </ToolGroup>
                  <ToolGroup className="ml-[12px]">
                    <Tool short active w="w-[28px]"><div className="scale-[0.75]"><MoveIcon /></div></Tool>
                    <Tool short active w="w-[28px]"><div className="scale-[0.75]"><ScaleIcon /></div></Tool>
                    <Tool short active w="w-[28px]"><div className="scale-[0.75]"><RotateIcon /></div></Tool>
                    <Tool short active w="w-[28px]">
                      <svg viewBox="0 0 22 22" className="w-[23px] h-[23px]">
                        <circle cx="11" cy="11" r="9.5" fill="#8ea6cf" stroke="#9a6a45" strokeWidth="1.4" />
                        <text x="11" y="16" textAnchor="middle" fontSize="13" fontWeight="700" fill={NAVY} fontFamily="Liberation Sans">P</text>
                      </svg>
                    </Tool>
                    <Tool short w="w-[27px]">
                      <svg viewBox="0 0 20 20" className="w-[20px] h-[20px]">
                        {[4, 10, 16].map((y) => [4, 10, 16].map((x) => <circle key={`${x}${y}`} cx={x} cy={y} r="2.2" fill={y === 16 ? '#111' : OR} stroke="#222" strokeWidth="0.5" />))}
                      </svg>
                    </Tool>
                  </ToolGroup>
                  <ToolGroup className="ml-[12px]">
                    <Tool short active corner w="w-[26px]">
                      <svg viewBox="0 0 14 22" className="w-[14px] h-[22px]">
                        <rect x="1" y="1" width="12" height="20" fill="#c68032" stroke="#1c1c1c" />
                        <path d="M1 7h12M1 14h12M4 1v20M10 1v20" stroke="#1c1c1c" strokeWidth="1" />
                      </svg>
                    </Tool>
                  </ToolGroup>
                </div>

                {/* Material manager and coordinates */}
                <div className="mt-[4px] flex h-[137px] border-t border-[#585858]">
                  <div className="w-[899px] border-r border-[#383838]">
                    <div className="h-[28px] flex items-center border-b border-[#5a5a5a] text-[#ababab]">
                      <Grip className="ml-[6px] w-[10px] h-[12px]" />
                      <div className="ml-[9px] flex gap-[14px]">
                        <span>创建</span>
                        <span>编辑</span>
                        <span>功能</span>
                        <span>纹理</span>
                      </div>
                    </div>
                  </div>
                  <div className="ml-[7px] w-[365px]">
                    <div className="h-[21px] flex items-center border-b border-[#5a5a5a] text-[#ababab]">
                      <Grip className="ml-[4px] w-[10px] h-[12px]" />
                      <span className="ml-[10px] w-[115px]">位置</span>
                      <span className="w-[116px]">尺寸</span>
                      <span>旋转</span>
                    </div>
                    <div className="mt-[6px] flex flex-col gap-[4px]">
                      <CoordRow a="X" b="X" c="H" av="0 cm" cv="0 °" />
                      <CoordRow a="Y" b="Y" c="P" av="0 cm" cv="0 °" />
                      <CoordRow a="Z" b="Z" c="B" av="0 cm" cv="0 °" />
                    </div>
                    <div className="mt-[6px] flex h-[21px] pl-[16px]">
                      <div className="w-[104px] rounded-[2px] bg-[#6b6b6b] flex items-center justify-between px-[6px] text-[#c4c4c4]">
                        <span>对象 (相对)</span>
                        <ChevronDown className="w-[10px] h-[10px]" strokeWidth={4} />
                      </div>
                      <div className="ml-[17px] w-[103px] rounded-[2px] bg-[#555] flex items-center justify-between px-[6px] text-[#777]">
                        <span>绝对尺寸</span>
                        <ChevronDown className="w-[10px] h-[10px]" strokeWidth={4} />
                      </div>
                      <div className="ml-[18px] w-[101px] rounded-[5px] bg-[#6b6b6b] flex items-center justify-center text-[#c4c4c4]">应用</div>
                    </div>
                  </div>
                </div>
              </div>
            </div>

            {/* Status bar */}
            <div className="h-[23px] flex items-center text-[14px] text-[#a0a0a0] border-t border-[#5a5a5a] whitespace-nowrap">
              <Grip className="ml-[4px] w-[11px] h-[14px]" />
              <span className="ml-[11px] w-[376px] tracking-[0.07px]">自动保存 F:\备份文档\未标题 10@20201218_045656 成功</span>
              <span className="w-px h-[23px] bg-[#303030] mr-[4px]" />
              <span>框选：点击并拖动鼠标框选元素。按住 SHIFT 键增加选择对象；按住 CTRL 键减少选择对象。</span>
            </div>
          </div>

          {/* Right side */}
          <div className="flex-1 relative flex pl-[3px]">
            <div className="w-[576px] flex flex-col">
              {/* Object manager */}
              <div className="mt-[3px] h-[476px] border border-[#585858] flex flex-col">
                <div className="h-[28px] flex items-center border-b-2 border-[#383838] text-[#ababab]">
                  <Grip className="ml-[6px] w-[10px] h-[12px]" />
                  <div className="ml-[8px] flex gap-[14px]">
                    <span>文件</span>
                    <span>编辑</span>
                    <span>查看</span>
                    <span>对象</span>
                    <span>标签</span>
                    <span>书签</span>
                  </div>
                  <div className="ml-auto mr-[3px] flex items-center gap-[4px]">
                    <svg viewBox="0 0 14 18" className="w-[11px] h-[14px]" fill="none" stroke="#777" strokeWidth="1.6"><circle cx="5" cy="5" r="4" /><path d="M7 9l5 8" /></svg>
                    <svg viewBox="0 0 14 14" className="w-[14px] h-[14px]" fill="none" stroke="#aaa" strokeWidth="2"><path d="M7 2L2 7v5h10V7z" /></svg>
                    <span className="w-[10px] h-[10px] rounded-full border border-[#666]" />
                    <svg viewBox="0 0 14 14" className="w-[13px] h-[13px]" fill="none" stroke="#999" strokeWidth="1.2"><rect x="1" y="1" width="12" height="12" /><path d="M4 7h6M7 4v6M1 3h12" /></svg>
                  </div>
                </div>
                <div className="flex-1 flex">
                  <div className="w-[84px] border-r border-[#383838]">
                    <div className="h-[21px] mt-[1px] bg-[#505050] flex items-center pl-[6px] text-[#d9bd3a]">
                      <span className="w-[8px] h-[8px] border-l border-b border-[#999] -mt-[6px] mr-[2px]" />
                      <svg viewBox="0 0 12 14" className="w-[11px] h-[13px] mr-[6px]"><path d="M6 1l5 12H1z" fill="#8db6df" /><path d="M6 1v12" stroke="#fff" strokeWidth="0.6" /></svg>
                      多边形
                    </div>
                  </div>
                  <div className="w-[39px] border-r border-[#383838]">
                    <div className="h-[21px] mt-[1px] bg-[#505050] flex items-center pl-[5px] gap-[3px]">
                      <span className="w-[10px] h-[10px] bg-[#6a6a6a]" />
                      <span className="w-[3px] h-[10px] border-y-[3px] border-[#777]" />
                    </div>
                  </div>
                  <div className="flex-1">
                    <div className="h-[21px] mt-[1px] bg-[#505050] flex items-center pl-[3px]">
                      <svg viewBox="0 0 14 16" className="w-[12px] h-[14px]"><circle cx="4" cy="4" r="3" fill="#b56b2a" /><circle cx="10" cy="11" r="3.5" fill="#c77a30" /></svg>
                    </div>
                  </div>
                </div>
              </div>

              {/* Attribute manager */}
              <div className="mt-[6px] flex-1 border border-[#585858] flex flex-col">
                <div className="h-[28px] flex items-center border-b border-[#383838] text-[#ababab]">
                  <Grip className="ml-[6px] w-[10px] h-[12px]" />
                  <div className="ml-[8px] flex gap-[14px]">
                    <span>模式</span>
                    <span>编辑</span>
                    <span>用户数据</span>
                  </div>
                  <div className="ml-auto mr-[3px] flex items-center gap-[5px]">
                    <span className="mr-[50px] w-0 h-0 border-y-[6px] border-y-transparent border-r-[13px] border-r-[#222]" />
                    <svg viewBox="0 0 14 18" className="w-[11px] h-[14px]" fill="none" stroke="#777" strokeWidth="1.6"><circle cx="5" cy="5" r="4" /><path d="M7 9l5 8" /></svg>
                    <svg viewBox="0 0 14 16" className="ml-[3px] w-[12px] h-[14px]" fill="none" stroke="#6f6f6f" strokeWidth="1.4"><rect x="2" y="7" width="10" height="8" /><path d="M4 7V4a3 3 0 0 1 6 0v3" /></svg>
                    <svg viewBox="0 0 14 14" className="w-[14px] h-[14px]" fill="none" stroke="#8a8a8a"><circle cx="7" cy="7" r="6" /><circle cx="7" cy="7" r="3" /></svg>
                    <svg viewBox="0 0 14 14" className="w-[13px] h-[13px]" fill="none" stroke="#999" strokeWidth="1.2"><rect x="1" y="1" width="12" height="12" /><path d="M4 7h6M7 4v6M1 3h12" /></svg>
                  </div>
                </div>
                <div className="h-[28px] flex items-center pl-[2px] text-[#a8a8a8]">
                  <svg viewBox="0 0 20 20" className="w-[18px] h-[18px] mr-[5px]">
                    <rect x="1" y="1" width="10" height="11" fill="none" stroke="#a5503c" strokeWidth="1.6" />
                    <path d="M13 13l5 5-3 1-3-2z" fill="#222" />
                  </svg>
                  框选
                </div>
                <div className="flex pl-[1px] h-[23px] text-center leading-[23px]">
                  <span className="w-[64px] bg-[#7f9fcf] text-[#111d33] rounded-l-[2px] border-r border-[#333]">选项</span>
                  <span className="w-[64px] bg-[#6a6a6a] text-[#c0c0c0] border-r border-[#333]">轴向</span>
                  <span className="w-[63px] bg-[#6a6a6a] text-[#c0c0c0] border-r border-[#333]">对象轴心</span>
                  <span className="w-[65px] bg-[#7f9fcf] text-[#111d33] rounded-r-[2px]">柔和选择</span>
                </div>
                <div className="flex flex-1">
                  <div className="w-[557px] pl-[1px] pt-[6px]">
                    <Section>选项</Section>
                    <div className="h-[26px] mt-[4px] flex items-center pl-[22px] text-[#a8a8a8]">
                      <span className="w-[104px] whitespace-nowrap">容差选择 <span className="text-[#777] tracking-[1px]">.......</span></span>
                      <Check />
                    </div>
                    <div className="h-[26px] flex items-center pl-[22px] text-[#a8a8a8]">
                      <span className="w-[104px] whitespace-nowrap">仅选择可见元素</span>
                      <Check />
                    </div>
                    <Section className="mt-[2px]">柔和选择</Section>
                    <div className="h-[26px] mt-[4px] flex items-center pl-[22px]">
                      <span className="w-[34px] text-[#a8a8a8]">启用</span>
                      <Check />
                      <Dim className="ml-[41px] w-[35px]">预览</Dim>
                      <span className="text-[#7a7a7a] text-[13px]">✓</span>
                    </div>
                    <div className="h-[25px] flex items-center pl-[22px]">
                      <Dim className="w-[34px]">表面</Dim>
                      <Check />
                      <Dim className="ml-[41px] w-[35px]">橡皮</Dim>
                      <Check />
                      <Dim className="ml-[40px] w-[34px]">限制</Dim>
                      <Check />
                    </div>
                    <div className="h-[23px] flex items-center pl-[22px]">
                      <Dim className="w-[33px]">衰减</Dim>
                      <div className="w-[86px] h-[21px] bg-[#5c5c5c] flex items-center justify-between px-[6px] text-[#777]">
                        <span>线性</span>
                        <ChevronDown className="w-[8px] h-[8px]" strokeWidth={4} />
                      </div>
                      <Dim className="ml-[27px] w-[33px]">模式</Dim>
                      <div className="w-[72px] h-[21px] bg-[#5c5c5c] flex items-center justify-between px-[6px] text-[#777]">
                        <span>全部</span>
                        <ChevronDown className="w-[8px] h-[8px]" strokeWidth={4} />
                      </div>
                    </div>
                    <Slider label="半径" value="100 cm" fill="w-[41px]" />
                    <Slider label="强度" value="100 %" fill="w-[412px]" />
                    <Slider label="宽度" value="50 %" fill="w-[207px]" />
                    <div className="mt-[1px] pl-[39px]">
                      <FalloffGraph />
                    </div>
                  </div>
                  <div className="w-[10px] mt-[4px] ml-[1px] flex flex-col items-center">
                    <span className="w-0 h-0 border-x-[4px] border-x-transparent border-b-[8px] border-b-[#aaa]" />
                    <div className="w-[8px] flex-1 bg-[#6a6a6a] rounded-[2px] my-[1px]" />
                    <span className="w-0 h-0 mb-[2px] border-x-[4px] border-x-transparent border-t-[8px] border-t-[#aaa]" />
                  </div>
                </div>
              </div>
            </div>

            {/* Vertical tabs */}
            <div className="ml-[1px] w-[26px] flex flex-col text-[13px]">
              <div className="mt-[3px] h-[40px] bg-[#777] text-[#e0a23a] flex items-center justify-center">
                <span className="[writing-mode:vertical-rl] [text-orientation:sideways] rotate-180">对象</span>
              </div>
              <div className="h-[35px] bg-[#555] text-[#8a8a8a] flex items-center justify-center">
                <span className="[writing-mode:vertical-rl] [text-orientation:sideways] rotate-180">场次</span>
              </div>
              <div className="mt-[9px] h-[74px] bg-[#555] text-[#8a8a8a] flex items-center justify-center">
                <span className="[writing-mode:vertical-rl] [text-orientation:sideways] rotate-180">内容浏览器</span>
              </div>
              <div className="mt-[6px] h-[34px] bg-[#555] text-[#8a8a8a] flex items-center justify-center">
                <span className="[writing-mode:vertical-rl] [text-orientation:sideways] rotate-180">构造</span>
              </div>
              <div className="mt-[284px] h-[38px] bg-[#777] text-[#e0a23a] flex items-center justify-center">
                <span className="[writing-mode:vertical-rl] [text-orientation:sideways] rotate-180">属性</span>
              </div>
              <div className="h-[25px] bg-[#3a3a3a] text-[#8a8a8a] flex items-center justify-center">
                <span className="[writing-mode:vertical-rl] [text-orientation:sideways] rotate-180">层</span>
              </div>
            </div>

            {/* Green scroll grip */}
            <div className="absolute right-[2px] -top-[4px] w-[8px] h-[59px] rounded-[4px] border border-[#999] bg-[#333] flex flex-col justify-end gap-[1px] p-[1px]">
              <span className="h-[2px] bg-[#3fd06c]" />
              <span className="h-[2px] bg-[#3fd06c]" />
              <span className="h-[2px] bg-[#3fd06c]" />
              <span className="h-[2px] bg-[#3fd06c]" />
            </div>
          </div>
        </div>
      </div>

      {/* Watermark */}
      <div className="absolute left-[12px] top-[1030px] flex items-center opacity-70">
        <svg viewBox="0 0 38 38" className="w-[38px] h-[38px]">
          <rect x="2" y="2" width="34" height="34" rx="5" fill="none" stroke="#6c6c6c" strokeWidth="4" />
          <path d="M10 12h18M19 12v18M9 24c4-6 8-2 9 2" fill="none" stroke="#6c6c6c" strokeWidth="4" />
        </svg>
        <span className="ml-[10px] font-['Liberation_Sans'] font-bold text-[39px] text-[#6c6c6c]">tafe.cc</span>
      </div>
    </div>
  );
}
